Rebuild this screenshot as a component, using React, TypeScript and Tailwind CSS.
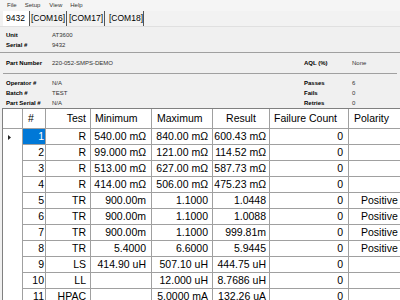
import React from 'react'

type Row = {
  n: number
  test: string
  min: string
  max: string
  result: string
  fails: string
  polarity: string
}

const rows: Row[] = [
  { n: 1, test: 'R', min: '540.00 mΩ', max: '840.00 mΩ', result: '600.43 mΩ', fails: '0', polarity: '' },
  { n: 2, test: 'R', min: '99.000 mΩ', max: '121.00 mΩ', result: '114.52 mΩ', fails: '0', polarity: '' },
  { n: 3, test: 'R', min: '513.00 mΩ', max: '627.00 mΩ', result: '587.73 mΩ', fails: '0', polarity: '' },
  { n: 4, test: 'R', min: '414.00 mΩ', max: '506.00 mΩ', result: '475.23 mΩ', fails: '0', polarity: '' },
  { n: 5, test: 'TR', min: '900.00m', max: '1.1000', result: '1.0448', fails: '0', polarity: 'Positive' },
  { n: 6, test: 'TR', min: '900.00m', max: '1.1000', result: '1.0088', fails: '0', polarity: 'Positive' },
  { n: 7, test: 'TR', min: '900.00m', max: '1.1000', result: '999.81m', fails: '0', polarity: 'Positive' },
  { n: 8, test: 'TR', min: '5.4000', max: '6.6000', result: '5.9445', fails: '0', polarity: 'Positive' },
  { n: 9, test: 'LS', min: '414.90 uH', max: '507.10 uH', result: '444.75 uH', fails: '0', polarity: '' },
  { n: 10, test: 'LL', min: '', max: '12.000 uH', result: '8.7686 uH', fails: '0', polarity: '' },
  { n: 11, test: 'HPAC', min: '', max: '5.0000 mA', result: '132.26 uA', fails: '0', polarity: '' },
]

function Field({ label, value, labelW = 'w-[46px]' }: { label: string; value: string; labelW?: string }) {
  return (
    <div className="flex items-center h-[10px]">
      <span className={`${labelW} font-bold text-[6px] text-black`}>{label}</span>
      <span className="text-[6px] text-[#333]">{value}</span>
    </div>
  )
}

export default function App() {
  const cell = 'h-full flex items-center border-r border-[#a0a0a0] shrink-0'

  return (
    <div className="w-[400px] h-[300px] overflow-hidden bg-[#f0f0f0] text-black" style={{ fontFamily: '"Liberation Sans", Arial, sans-serif' }}>
      {/* Menu */}
      <div className="h-[11px] flex items-center text-[6px] text-[#333] bg-[#f5f5f5]">
        <span className="ml-[7px]">File</span>
        <span className="ml-[8px]">Setup</span>
        <span className="ml-[9px]">View</span>
        <span className="ml-[8px]">Help</span>
      </div>

      {/* Tabs */}
      <div className="h-[16px] flex items-center text-[8.5px] border-b border-[#e0e0e0] bg-[#f2f2f2]">
        <div className="ml-[3px] h-full w-[27px] bg-white flex items-center pl-[3px] border-r border-[#555]">9432</div>
        <div className="h-full w-[37px] flex items-center pl-[1px] border-r border-[#555]">[COM16]</div>
        <div className="h-full w-[38px] flex items-center pl-[2px] border-r border-[#555]">[COM17]</div>
        <div className="h-full w-[39px] flex items-center pl-[4px] border-r border-[#555]">[COM18]</div>
      </div>

      {/* Unit info */}
      <div className="h-[26px] pl-[6px] pt-[1px] flex flex-col justify-center border-b border-[#a0a0a0]">
        <Field label="Unit" value="AT3600" />
        <Field label="Serial #" value="9432" />
      </div>

      {/* Part number */}
      <div className="h-[21px] mx-[3px] pl-[3px] flex items-center border-b border-[#a0a0a0]">
        <span className="w-[46px] font-bold text-[6px]">Part Number</span>
        <span className="text-[6px] text-[#333] w-[252px]">220-052-SMPS-DEMO</span>
        <span className="w-[48px] font-bold text-[6px]">AQL (%)</span>
        <span className="text-[6px] text-[#333]">None</span>
      </div>

      {/* Operator info */}
      <div className="h-[34px] pl-[6px] pt-[4px] flex">
        <div className="w-[298px] flex flex-col">
          <Field label="Operator #" value="N/A" />
          <Field label="Batch #" value="TEST" />
          <Field label="Part Serial #" value="N/A" />
        </div>
        <div className="flex flex-col">
          <Field label="Passes" value="6" labelW="w-[48px]" />
          <Field label="Fails" value="0" labelW="w-[48px]" />
          <Field label="Retries" value="0" labelW="w-[48px]" />
        </div>
      </div>

      {/* Grid */}
      <div className="ml-[2px] h-[200px] bg-white border-l border-t border-[#808080] text-[10.5px] overflow-hidden">
        <div className="h-[20px] flex border-b border-[#a0a0a0]">
          <div className={`${cell} w-[20px]`} />
          <div className={`${cell} w-[23px] pl-[5px]`}>#</div>
          <div className={`${cell} w-[45px] justify-end pr-[4px]`}>Test</div>
          <div className={`${cell} w-[61px] pl-[4px]`}>Minimum</div>
          <div className={`${cell} w-[61px] pl-[5px]`}>Maximum</div>
          <div className={`${cell} w-[57px] justify-center`}>Result</div>
          <div className={`${cell} w-[79px] pl-[4px]`}>Failure Count</div>
          <div className={`${cell} w-[60px] pl-[5px]`}>Polarity</div>
        </div>
        {rows.map((r, i) => (
          <div key={r.n} className="h-[16px] flex">
            <div className={`${cell} w-[20px] pl-[5px]`}>
              {i === 0 && (
                <svg width="3" height="5" viewBox="0 0 3 5">
                  <path d="M0 0 L3 2.5 L0 5 Z" fill="#222" />
                </svg>
              )}
            </div>
            <div className={`${cell} w-[23px] justify-end pr-[1px] border-b ${i === 0 ? 'bg-[#0078d7] text-white' : ''}`}>{r.n}</div>
            <div className={`${cell} w-[45px] justify-end pr-[4px] border-b`}>{r.test}</div>
            <div className={`${cell} w-[61px] justify-end pr-[5px] border-b`}>{r.min}</div>
            <div className={`${cell} w-[61px] justify-end pr-[4px] border-b`}>{r.max}</div>
            <div className={`${cell} w-[57px] justify-end pr-[3px] border-b`}>{r.result}</div>
            <div className={`${cell} w-[79px] justify-end pr-[5px] border-b`}>{r.fails}</div>
            <div className={`${cell} w-[60px] pl-[12px] border-b`}>{r.polarity}</div>
          </div>
        ))}
      </div>
    </div>
  )
}
